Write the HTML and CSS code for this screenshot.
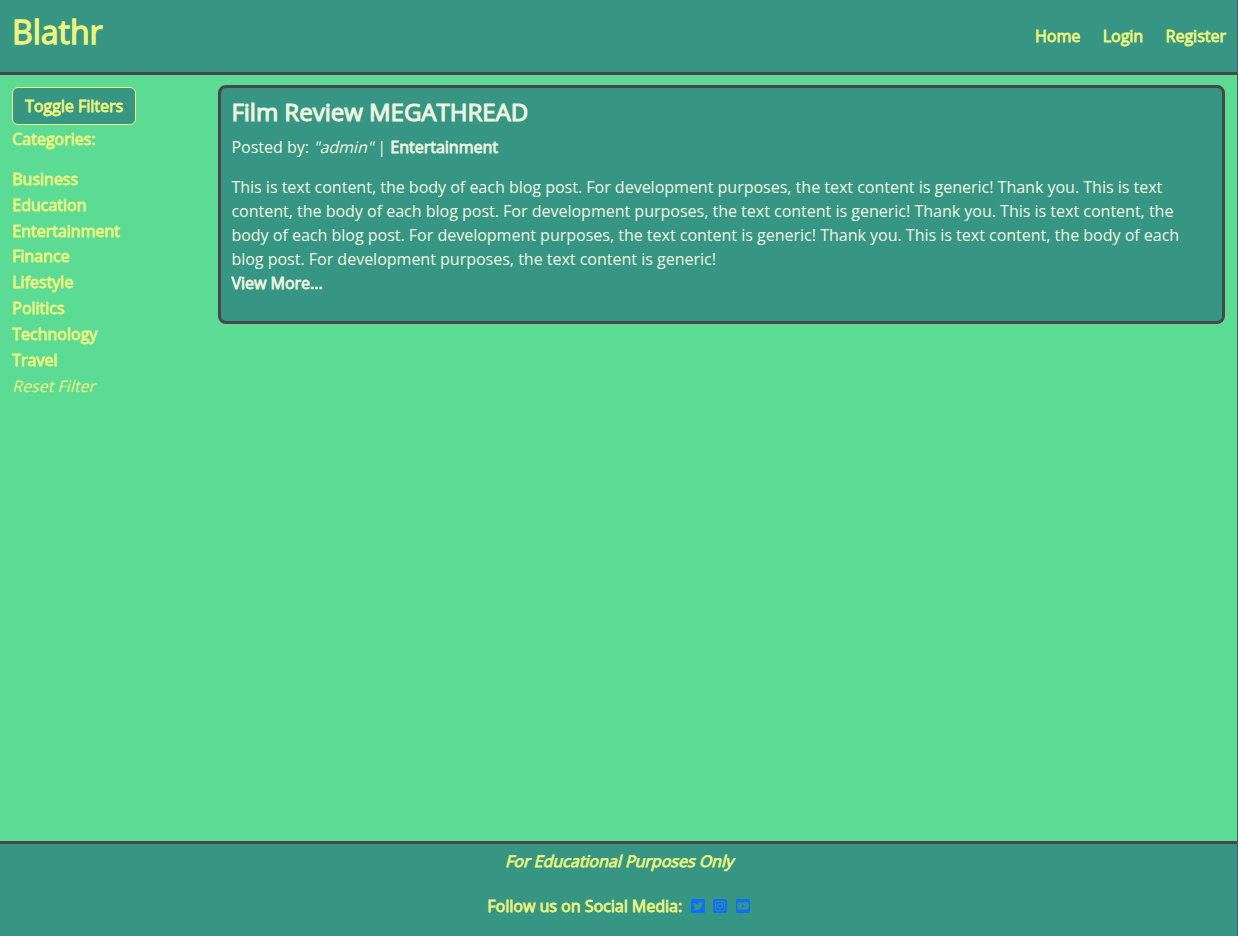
FILE: index.html
```html
<!DOCTYPE html>
<html lang="en">
<head>
<meta charset="utf-8">
<title>Blathr</title>
<link rel="stylesheet" href="styles.css">
</head>
<body>
<header class="site-header">
  <a class="brand strong">Blathr</a>
  <nav class="nav strong"><a>Home</a><a>Login</a><a>Register</a></nav>
</header>
<main class="main">
  <aside class="sidebar">
    <button class="toggle strong">Toggle Filters</button>
    <p class="label strong">Categories:</p>
    <ul class="categories strong">
      <li>Business</li><li>Education</li><li>Entertainment</li><li>Finance</li>
      <li>Lifestyle</li><li>Politics</li><li>Technology</li><li>Travel</li>
    </ul>
    <a class="reset"><span class="slant">Reset Filter</span></a>
  </aside>
  <article class="post">
    <h2 class="title strong">Film Review MEGATHREAD</h2>
    <p class="meta">Posted by: <span class="slant">"admin"</span> | <span class="strong">Entertainment</span></p>
    <p class="body">This is text content, the body of each blog post. For development purposes, the text content is generic! Thank you. This is text content, the body of each blog post. For development purposes, the text content is generic! Thank you. This is text content, the body of each blog post. For development purposes, the text content is generic! Thank you. This is text content, the body of each blog post. For development purposes, the text content is generic!</p>
    <a class="more strong">View More...</a>
  </article>
</main>
<footer class="site-footer strong">
  <p class="notice"><span class="slant">For Educational Purposes Only</span></p>
  <div class="social">
    <span>Follow us on Social Media:</span>
    <svg class="icon" viewBox="0 0 448 512"><path fill-rule="evenodd" d="M400 32H48C21.500 32 0 53.500 0 80v352c0 26.500 21.500 48 48 48h352c26.500 0 48-21.500 48-48V80c0-26.500-21.500-48-48-48zm-48.900 158.800c.2 2.800.2 5.700.2 8.500 0 86.700-66 186.600-186.600 186.600-37.200 0-71.700-10.800-100.700-29.400 5.300.6 10.400.8 15.800.8 30.700 0 58.900-10.400 81.400-28-28.800-.6-53-19.500-61.300-45.500 10.100 1.500 19.200 1.500 29.600-1.200-30-6.100-52.500-32.500-52.500-64.400v-.8c8.700 4.900 18.900 7.900 29.600 8.300a65.450 65.450 0 0 1-29.200-54.600c0-12.200 3.200-23.400 8.900-33.100 32.300 39.800 80.800 65.800 135.200 68.600-9.300-44.500 24-80.600 64-80.600 18.900 0 35.900 7.900 47.900 20.700 14.800-2.800 29-8.300 41.600-15.800-4.900 15.200-15.200 28-28.800 36.100 13.200-1.400 26-5.100 37.800-10.200-8.900 13.100-20.100 24.700-32.900 34z"/></svg>
    <svg class="icon" viewBox="0 0 448 512"><path fill-rule="evenodd" d="M48 32H400Q448 32 448 80V432Q448 480 400 480H48Q0 480 0 432V80Q0 32 48 32zM142 86Q62 86 62 166V346Q62 426 142 426H306Q386 426 386 346V166Q386 86 306 86zM144 116H304Q356 116 356 168V344Q356 396 304 396H144Q92 396 92 344V168Q92 116 144 116zM224 169a87 87 0 1 0 0 174 87 87 0 1 0 0-174zm0 31a56 56 0 1 1 0 112 56 56 0 1 1 0-112zM314 146a20 20 0 1 0 0 40 20 20 0 1 0 0-40z"/></svg>
    <svg class="icon" viewBox="0 0 448 512"><path fill-rule="evenodd" d="M48 32H400Q448 32 448 80V432Q448 480 400 480H48Q0 480 0 432V80Q0 32 48 32zM100 139Q42 144 42 202V310Q42 368 100 373H348Q406 368 406 310V202Q406 144 348 139zM187 203l94 53-94 53z"/></svg>
  </div>
</footer>
</body>
</html>
```
FILE: styles.css
```css
* { box-sizing: border-box; }
body {
  margin: 0;
  width: 100%;
  height: 936px;
  display: flex;
  flex-direction: column;
  border-right: 1px solid #38615a;
  background: #5cdb95;
  color: #edf5e1;
  font: 16px/24px "Open Sans", sans-serif;
  overflow: hidden;
}
p, h2, ul { margin: 0; padding: 0; }
.strong { font-weight: 400; -webkit-text-stroke: 0.8px currentColor; }
.slant { display: inline-block; transform: skewX(-14deg); transform-origin: 0 75%; }
.site-header {
  height: 75px;
  padding: 0 11px 0 12px;
  display: flex;
  justify-content: space-between;
  background: #379683;
  border-bottom: 3px solid #484848;
  color: #edf57e;
}
.brand { font-size: 32px; line-height: 48px; padding-top: 8px; -webkit-text-stroke-width: 1.3px; }
.nav { display: flex; gap: 22.4px; padding-top: 24px; }
.main { flex: 1; display: flex; padding: 10px 12px 0; }
.sidebar { width: 206px; color: #edf57e; padding-top: 2px; }
.toggle {
  display: block;
  width: 124px;
  height: 38px;
  padding: 0;
  font: inherit;
  color: inherit;
  background: #379683;
  border: 1px solid #edf57e;
  border-radius: 6px;
}
.label { padding-top: 2px; }
.categories { list-style: none; padding: 16px 0 0.6px; line-height: 25.8px; }
.post {
  flex: 1;
  height: 239px;
  padding: 8px 10px 8px 10.4px;
  background: #379683;
  border: 3px solid #484848;
  border-radius: 8px;
}
.title { font-size: 24px; line-height: 32px; -webkit-text-stroke-width: 1.1px; }
.meta { padding: 7px 0 16px; }
.more { display: block; }
.site-footer {
  height: 95px;
  background: #379683;
  border-top: 3px solid #484848;
  color: #edf57e;
  text-align: center;
}
.notice { padding-top: 5px; }
.social { display: flex; justify-content: center; align-items: center; gap: 8.5px; padding-top: 21px; }
.icon { width: 14px; height: 16px; fill: #0d6efd; }
```
